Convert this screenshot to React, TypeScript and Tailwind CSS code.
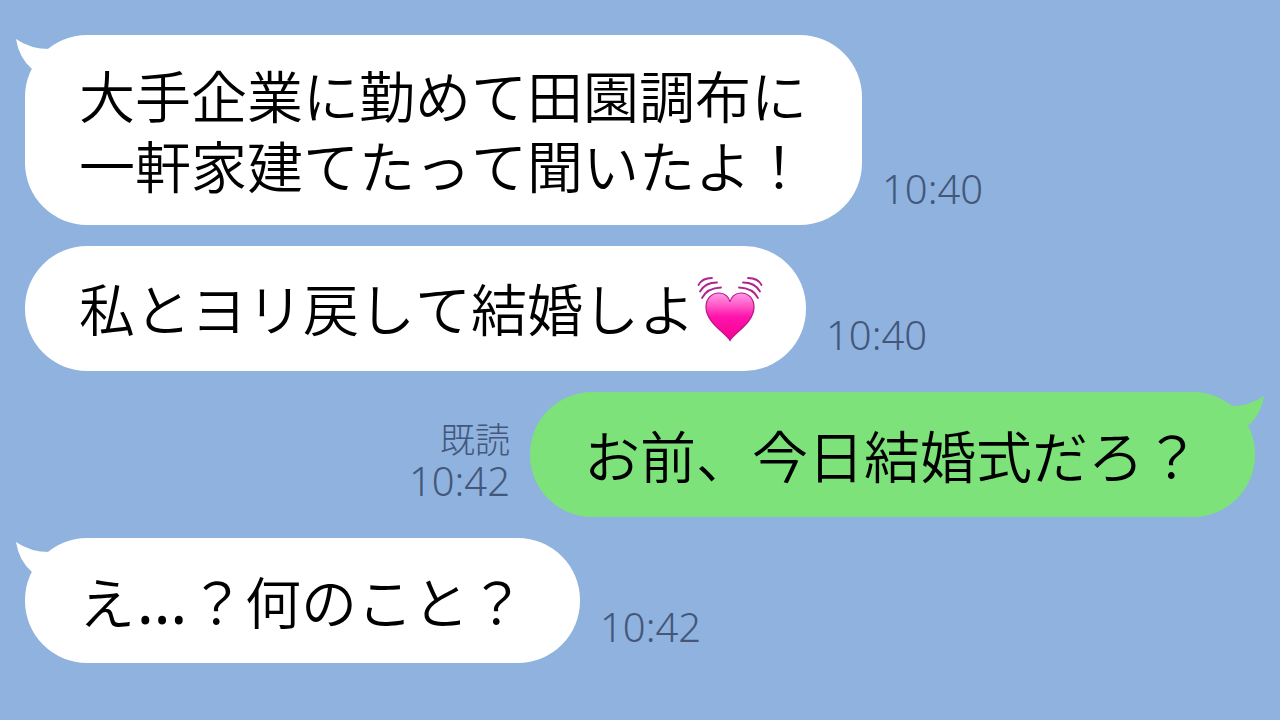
import { clsx } from 'clsx';
import type { ReactNode } from 'react';

interface Message {
  id: number;
  mine?: boolean;
  tail?: boolean;
  read?: boolean;
  time: string;
  body: ReactNode;
}

const MESSAGES: Message[] = [
  {
    id: 1,
    tail: true,
    time: '10:40',
    body: (
      <>
        大手企業に勤めて田園調布に
        <br />
        一軒家建てたって聞いたよ！
      </>
    ),
  },
  {
    id: 2,
    time: '10:40',
    body: (
      <>
        私とヨリ戻して結婚しよ
        <BeatingHeart />
      </>
    ),
  },
  { id: 3, mine: true, tail: true, read: true, time: '10:42', body: 'お前、今日結婚式だろ？' },
  {
    id: 4,
    tail: true,
    time: '10:42',
    body: (
      <>
        え<Ellipsis />？何のこと？
      </>
    ),
  },
];

export default function App() {
  return (
    <main
      lang="ja"
      className="flex min-h-screen flex-col gap-[21px] bg-[#8fb2de] px-[25px] pt-[35px] pb-12 font-['Noto_Sans_CJK_JP',sans-serif]"
    >
      {MESSAGES.map((m) => (
        <MessageRow key={m.id} message={m} />
      ))}
    </main>
  );
}

function MessageRow({ message }: { message: Message }) {
  const { mine, tail, read, time, body } = message;
  return (
    <div className={clsx('flex items-end gap-5', mine && 'flex-row-reverse')}>
      <div
        className={clsx(
          'relative flex min-h-[125px] items-center rounded-[62px] pr-[55px] pl-[54px] pt-6 pb-[26px]',
          mine ? 'bg-[#7de27a]' : 'bg-white',
        )}
      >
        {tail && <Tail mine={mine} />}
        <p className="text-[56px] leading-[70px] font-[350] whitespace-nowrap text-black [font-kerning:none]">
          {body}
        </p>
      </div>
      <div className={clsx('flex flex-col pb-[13px] text-[#43577b]', mine && 'items-end')}>
        {read && <span className="text-[35px] leading-10 font-extralight">既読</span>}
        <time className="font-['Noto_Sans',sans-serif] text-[40px] leading-[46px] font-light">{time}</time>
      </div>
    </div>
  );
}

function Tail({ mine }: { mine?: boolean }) {
  return (
    <svg
      viewBox="0 0 50 40"
      className={clsx(
        'absolute top-1 h-10 w-[50px]',
        mine ? '-right-[9px] -scale-x-100 fill-[#7de27a]' : '-left-[9px] fill-white',
      )}
      aria-hidden="true"
    >
      <path d="M0 0Q14 10 34 10L44 22L26 36L16 30Q3 19 0 0Z" />
    </svg>
  );
}

// Latin ellipsis, so the dots sit on the baseline
function Ellipsis() {
  return (
    <span className="inline-flex w-[54px] justify-center font-['Noto_Sans',sans-serif] text-[64px] leading-none font-normal">
      …
    </span>
  );
}

function BeatingHeart() {
  return (
    <span className="relative inline-block h-14 w-14 align-middle">
      <svg viewBox="0 0 66 66" className="absolute -top-[11px] left-0.5 size-[66px] max-w-none" role="img" aria-label="ハート">
        <defs>
          <linearGradient id="heart" x1="0" y1="0" x2="0" y2="1">
            <stop offset="0" stopColor="#ff9be6" />
            <stop offset="0.25" stopColor="#ff5cc8" />
            <stop offset="0.5" stopColor="#ff14ac" />
            <stop offset="1" stopColor="#f5008f" />
          </linearGradient>
        </defs>
        <path
          d="M33 64.5C29 57 9 47 9 31C9 22 15 17 22 17C28 17 32 21 33 26C34 21 38 17 44 17C51 17 57 22 57 31C57 47 37 57 33 64.5Z"
          fill="url(#heart)"
          stroke="#b8148c"
          strokeWidth="1.2"
        />
        <g fill="none" stroke="#ae2590" strokeWidth="1.8" strokeLinecap="round">
          <path d="M1.5 9Q5 2 15 2" />
          <path d="M3 15.5Q8 6.5 20 6.5" />
          <path d="M5 22Q10 12 24 11.5" />
          <path d="M64.5 9Q61 2 51 2" />
          <path d="M63 15.5Q58 6.5 46 6.5" />
          <path d="M61 22Q56 12 42 11.5" />
        </g>
      </svg>
    </span>
  );
}
